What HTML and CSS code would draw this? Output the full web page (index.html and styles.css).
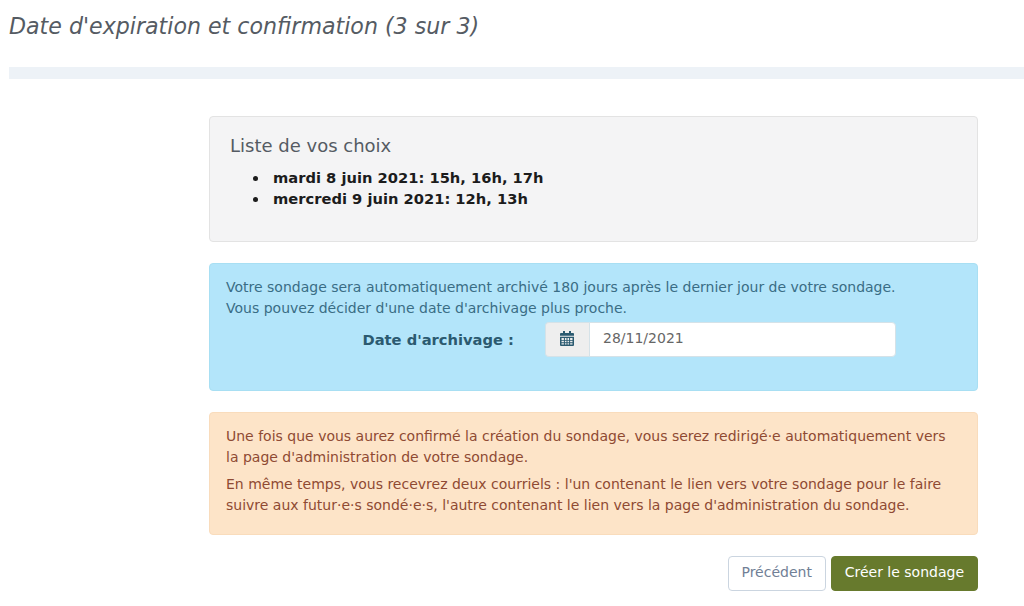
FILE: index.html
```html
<!DOCTYPE html>
<html lang="fr">
<head>
<meta charset="UTF-8">
<meta name="viewport" content="width=device-width, initial-scale=1.0">
<title>Date d'expiration et confirmation</title>
<link rel="stylesheet" href="styles.css">
</head>
<body>
<h2 class="stepTitle">Date d'expiration et confirmation (3 sur 3)</h2>
<div class="progress"></div>
<div class="content">
    <div class="well">
        <h4>Liste de vos choix</h4>
        <ul>
            <li>mardi 8 juin 2021: 15h, 16h, 17h</li>
            <li>mercredi 9 juin 2021: 12h, 13h</li>
        </ul>
    </div>
    <div class="alert alertInfo">
        <p>Votre sondage sera automatiquement archivé 180 jours après le dernier jour de votre sondage.<br>Vous pouvez décider d'une date d'archivage plus proche.</p>
        <div class="dateRow">
            <label class="dateLabel">Date d'archivage :</label>
            <div class="inputGroup">
                <span class="addon">
                    <svg width="14" height="15" viewBox="0 0 14 16" preserveAspectRatio="none"><path fill="#2b5a70" d="M3 0h2v2h4V0h2v2h2a1 1 0 0 1 1 1v2H0V3a1 1 0 0 1 1-1h2z"/><path fill="#2b5a70" fill-rule="evenodd" d="M0 6h14v9a1 1 0 0 1-1 1H1a1 1 0 0 1-1-1zM1.500 7.500v2h2.400v-2zm3.400 0v2h1.600v-2zm2.600 0v2h1.600v-2zm2.600 0v2h2.400v-2zm-8.600 3v1.500h2.400v-1.500zm3.400 0v1.500h1.600v-1.500zm2.600 0v1.500h1.600v-1.500zm2.600 0v1.500h2.400v-1.500zm-8.600 2.500v1.500h2.400v-1.500zm3.400 0v1.500h1.600v-1.500zm2.600 0v1.500h1.600v-1.500zm2.600 0v1.500h2.400v-1.500z"/></svg>
                </span>
                <input class="dateInput" type="text" value="28/11/2021">
            </div>
        </div>
    </div>
    <div class="alert alertWarning">
        <p>Une fois que vous aurez confirmé la création du sondage, vous serez redirigé·e automatiquement vers la page d'administration de votre sondage.</p>
        <p>En même temps, vous recevrez deux courriels : l'un contenant le lien vers votre sondage pour le faire suivre aux futur·e·s sondé·e·s, l'autre contenant le lien vers la page d'administration du sondage.</p>
    </div>
    <div class="actions">
        <button class="btn btnDefault">Précédent</button>
        <button class="btn btnSuccess">Créer le sondage</button>
    </div>
</div>
</body>
</html>
```

FILE: styles.css
```css
* {
    box-sizing: border-box;
}
html, body {
    height: 606px;
    overflow: hidden;
}
body {
    margin: 0;
    padding: 0 0 0 9px;
    font-family: "DejaVu Sans", sans-serif;
    font-size: 14px;
    line-height: 21px;
    color: #333;
    background-color: #fff;
}
.stepTitle {
    margin: 0;
    padding-top: 12px;
    font-size: 22.14px;
    line-height: 28px;
    font-weight: normal;
    font-style: italic;
    color: #555b63;
}
.progress {
    height: 12px;
    margin-top: 27px;
    background-color: #edf2f7;
}
.content {
    width: 769px;
    margin: 37px 0 0 200px;
}
.well {
    height: 126px;
    padding: 17px 20px;
    background-color: #f4f4f5;
    border: 1px solid #e3e3e3;
    border-radius: 4px;
}
.well h4 {
    margin: 0;
    font-size: 18px;
    line-height: 23px;
    font-weight: normal;
    color: #555b63;
}
.well ul {
    margin: 10px 0 0;
    padding-left: 39px;
    font-size: 14.7px;
    font-weight: bold;
    color: #1c1c1c;
}
.well li {
    padding-left: 4px;
}
.alert {
    border: 1px solid;
    border-radius: 4px;
    padding: 13px 16px;
}
.alert p {
    margin: 0;
}
.alertInfo {
    height: 128px;
    margin-top: 21px;
    background-color: #b3e5fa;
    border-color: #a8dff3;
    color: #3a6d85;
}
.dateRow {
    display: flex;
    align-items: center;
    margin-top: 3px;
}
.dateLabel {
    width: 288px;
    font-size: 14.7px;
    text-align: right;
    font-weight: bold;
    color: #2b5a70;
}
.inputGroup {
    display: flex;
    width: 351px;
    height: 35px;
    margin-left: 31px;
}
.addon {
    display: flex;
    align-items: center;
    justify-content: center;
    width: 44px;
    padding: 0 1px 3px 0;
    background-color: #eee;
    border: 1px solid #d5e2e8;
    border-right: none;
    border-radius: 4px 0 0 4px;
}
.dateInput {
    flex: 1;
    min-width: 0;
    padding: 0 13px 3px;
    font-family: inherit;
    font-size: 14px;
    color: #666;
    background-color: #fff;
    border: 1px solid #d5e2e8;
    border-radius: 0 4px 4px 0;
}
.alertWarning {
    height: 123px;
    margin-top: 21px;
    background-color: #fde4c8;
    border-color: #f9dcbc;
    color: #8f4a33;
}
.alertWarning p + p {
    margin-top: 6px;
}
.actions {
    display: flex;
    justify-content: flex-end;
    gap: 5px;
    margin-top: 21px;
}
.btn {
    height: 35px;
    padding: 0 13px 4px;
    font-family: inherit;
    font-size: 14px;
    border: 1px solid;
    border-radius: 4px;
    cursor: pointer;
}
.btnDefault {
    width: 98px;
    padding-left: 0;
    padding-right: 0;
    color: #718096;
    background-color: #fff;
    border-color: #cbd5e0;
}
.btnSuccess {
    color: #fff;
    background-color: #677a2d;
    border-color: #677a2d;
}
```
